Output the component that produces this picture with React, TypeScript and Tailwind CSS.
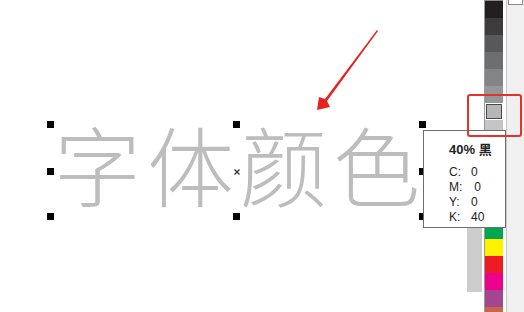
import React from "react";

const swatches = [
  "bg-[#231f20]",
  "bg-[#3d3b3c]",
  "bg-[#58585a]",
  "bg-[#6d6e70]",
  "bg-[#838485]",
  "bg-[#969798]",
  "selected",
  "bg-[#c4c5c6]",
  "bg-[#d6d6d7]",
  "bg-[#e8e8e8]",
  "bg-[#ffffff]",
  "bg-[#2e3192]",
  "bg-[#00aeef]",
  "bg-[#00a651]",
  "bg-[#fff200]",
  "bg-[#ed1c24]",
  "bg-[#ec008c]",
  "bg-[#a3468f]",
  "bg-[#c8654a]",
];

const handles = [
  "left-[47px] top-[121px]",
  "left-[233px] top-[121px]",
  "left-[419px] top-[121px]",
  "left-[47px] top-[168px]",
  "left-[419px] top-[168px]",
  "left-[47px] top-[213px]",
  "left-[233px] top-[213px]",
  "left-[419px] top-[213px]",
];

const cmyk = [
  ["C:", "0"],
  ["M:", " 0"],
  ["Y:", "0"],
  ["K:", "40"],
];

function Palette() {
  return (
    <div className="flex h-full w-[19px] flex-col border-l border-[#9a9a9a] bg-white">
      <div className="h-[5px] border border-t-0 border-[#8a8a8a] bg-white" />
      {swatches.map((s, i) =>
        s === "selected" ? (
          <div key={i} className="h-[17px] shrink-0 border border-white bg-white">
            <div className="h-full border border-[#4a4a4a] bg-[#b6b6b6]" />
          </div>
        ) : (
          <div key={i} className={`h-[17px] shrink-0 ${s}`} />
        )
      )}
    </div>
  );
}

export default function App() {
  return (
    <div className="relative flex h-[312px] w-[524px] overflow-hidden bg-white font-['Liberation_Sans','Noto_Sans_CJK_SC',sans-serif]">
      {/* drawing canvas */}
      <div className="relative flex-1">
        <div className="absolute left-[54px] top-[120px] whitespace-nowrap font-['Noto_Sans_CJK_SC',sans-serif] text-[87px] font-light leading-none tracking-[6px] text-[#bdbdbd]">
          字体颜色
        </div>
        {handles.map((h) => (
          <div key={h} className={`absolute h-[7px] w-[7px] bg-black ${h}`} />
        ))}
        {/* object centre mark */}
        <svg className="absolute left-[234px] top-[169px]" width="6" height="6" viewBox="0 0 6 6">
          <path d="M0.5 0.5 L5.5 5.5 M5.5 0.5 L0.5 5.5" stroke="#333" strokeWidth="1.3" />
        </svg>

        <svg className="absolute left-0 top-0" width="467" height="312" viewBox="0 0 467 312">
          <path d="M377 30 L325 99 L319 97 L317 110 L330 107 L327 101 L378 31 Z" fill="#e8231f" />
        </svg>
      </div>

      {/* scroll shadow column */}
      <div className="relative w-[17px]">
        <div className="absolute left-0 top-[228px] h-[64px] w-[15px] bg-[#cccccc]" />
      </div>

      <Palette />

      <div className="w-[3px] bg-white" />

      <div className="flex w-[18px] flex-col border-l border-[#c8c8c8] bg-[#f0f0f0]">
        <div className="mx-[1px] h-[5px] border border-t-0 border-[#8a8a8a] bg-white" />
      </div>

      {/* tooltip */}
      <div className="absolute left-[423px] top-[130px] h-[98px] w-[83px] border border-[#6e6e6e] bg-white pl-[25px] pt-[10px] text-[#222]">
        <div className="text-[13px] font-bold leading-[18px]">40% 黑</div>
        <div className="mt-[6px] flex flex-col">
          {cmyk.map(([k, v]) => (
            <div key={k} className="flex text-[12px] leading-[15px]">
              <span className="w-[22px]">{k}</span>
              <span className="whitespace-pre">{v}</span>
            </div>
          ))}
        </div>
      </div>

      {/* red highlight box */}
      <div className="absolute left-[467px] top-[94px] h-[43px] w-[55px] rounded-[3px] border-2 border-[#e5322a]" />
    </div>
  );
}
